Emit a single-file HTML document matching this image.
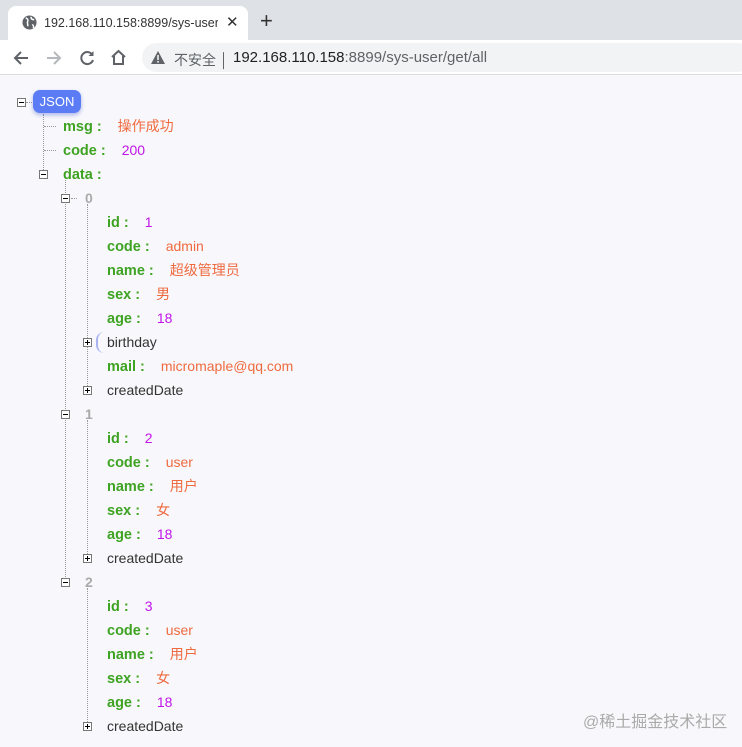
<!DOCTYPE html>
<html><head><meta charset="utf-8"><style>
*{margin:0;padding:0;box-sizing:border-box}
body{width:742px;height:747px;overflow:hidden;background:#f8f8fc;font-family:"Liberation Sans","Noto Sans CJK SC",sans-serif;position:relative}
.tabbar{position:absolute;left:0;top:0;width:742px;height:40px;background:#dee1e6}
.tab{position:absolute;left:8px;top:6px;width:240px;height:34px;background:#fff;border-radius:8px 8px 0 0}
.tab .t{position:absolute;left:36px;top:10px;font-size:12.5px;color:#333;white-space:nowrap;width:174px;overflow:hidden}
.tab .x{position:absolute;left:218px;top:7px;font-size:15px;color:#333}
.plus{position:absolute;left:260px;top:8px;font-size:22px;color:#333}
.nav{position:absolute;left:0;top:40px;width:742px;height:35px;background:#fff;border-bottom:1px solid #dadce0}
.addr{position:absolute;left:142px;top:3px;width:610px;height:29px;background:#f1f3f4;border-radius:15px}
.addr .w{position:absolute;left:32px;top:7px;font-size:14px;color:#5f6368}
.addr .u{position:absolute;left:91px;top:6px;font-size:15px;color:#202124}
.r{position:absolute;height:20px;line-height:20px;font-size:14px;white-space:nowrap}
.k{color:#3ea322;font-weight:bold;font-size:14.5px}
.s,.n{margin-left:16px}
.s{color:#ee6a3f}
.n{color:#c014e8}
.i{color:#aaa;font-weight:bold}
.p{color:#333}
.box{position:absolute;width:9px;height:9px;border:1px solid #777;background:#fff}
.box:before{content:"";position:absolute;left:1px;top:3px;width:5px;height:1px;background:#000}
.box.plusb:after{content:"";position:absolute;left:3px;top:1px;width:1px;height:5px;background:#000}
.vl{position:absolute;width:0;border-left:1px dotted #999}
.hl{position:absolute;height:0;border-top:1px dotted #999}
.json{position:absolute;left:33px;top:90px;width:48px;height:23px;background:#5b7cf5;border-radius:7px;color:#fff;font-size:13px;line-height:23px;text-align:center;box-shadow:0 2px 4px rgba(60,80,200,.4)}
.wm{position:absolute;left:583px;top:708px;font-size:16px;color:#aaa}
</style></head><body>
<div class="tabbar">
 <div class="tab">
  <svg style="position:absolute;left:14px;top:9px" width="15" height="15" viewBox="0 0 16 16"><circle cx="8" cy="8" r="7.5" fill="#5f6368"/><path d="M4 3c2 1 3 2 2 4s1 3 0 5M10 2c-1 2 1 3 3 3M11 10c1 1 2 2 1 4" stroke="#fff" stroke-width="1.6" fill="none"/></svg>
  <div class="t">192.168.110.158:8899/sys-user</div>
  <div class="x">✕</div>
 </div>
 <div class="plus">+</div>
</div>
<div class="nav">
 <svg style="position:absolute;left:12px;top:9px" width="18" height="18" viewBox="0 0 18 18"><path d="M16 9H3M9 3L3 9l6 6" stroke="#5f6368" stroke-width="2" fill="none"/></svg>
 <svg style="position:absolute;left:45px;top:9px" width="18" height="18" viewBox="0 0 18 18"><path d="M2 9h13M9 3l6 6-6 6" stroke="#b5b8bc" stroke-width="2" fill="none"/></svg>
 <svg style="position:absolute;left:78px;top:9px" width="18" height="18" viewBox="0 0 18 18"><path d="M14.5 6A6 6 0 1 0 15 11" stroke="#5f6368" stroke-width="2" fill="none"/><path d="M15.5 2v5h-5z" fill="#5f6368"/></svg>
 <svg style="position:absolute;left:109px;top:8px" width="19" height="19" viewBox="0 0 19 19"><path d="M3 9L9.5 3 16 9M5 8v8h9V8" stroke="#5f6368" stroke-width="2" fill="none"/></svg>
 <div class="addr">
  <svg style="position:absolute;left:9px;top:8px" width="14" height="13" viewBox="0 0 14 13"><path d="M7 0L14 13H0z" fill="#5f6368"/><rect x="6.2" y="4" width="1.6" height="5" fill="#f1f3f4"/><rect x="6.2" y="10" width="1.6" height="1.6" fill="#f1f3f4"/></svg>
  <div class="w">不安全 │</div>
  <div class="u">192.168.110.158<span style="color:#5f6368">:8899/sys-user/get/all</span></div>
 </div>
</div>

<div class="vl" style="left:43px;top:114px;height:60px"></div>
<div class="hl" style="left:44px;top:126px;width:12px"></div>
<div class="hl" style="left:44px;top:150px;width:12px"></div>
<div class="vl" style="left:65px;top:180px;height:403px"></div>
<div class="vl" style="left:87px;top:204px;height:186px"></div>
<div class="vl" style="left:87px;top:420px;height:138px"></div>
<div class="vl" style="left:87px;top:588px;height:138px"></div>
<div class="hl" style="left:26px;top:102px;width:6px"></div>

<div class="box" style="left:17px;top:98px"></div>
<div class="json">JSON</div>
<div class="r" style="left:63px;top:116px"><span class="k">msg :</span><span class="s">操作成功</span></div>
<div class="r" style="left:63px;top:140px"><span class="k">code :</span><span class="n">200</span></div>
<div class="box" style="left:39px;top:170px"></div>
<div class="r" style="left:63px;top:164px"><span class="k">data :</span></div>

<div class="box" style="left:61px;top:194px"></div><div class="hl" style="left:71px;top:198px;width:6px"></div>
<div class="r" style="left:85px;top:188px"><span class="i">0</span></div>
<div class="r" style="left:107px;top:212px"><span class="k">id :</span><span class="n">1</span></div>
<div class="r" style="left:107px;top:236px"><span class="k">code :</span><span class="s">admin</span></div>
<div class="r" style="left:107px;top:260px"><span class="k">name :</span><span class="s">超级管理员</span></div>
<div class="r" style="left:107px;top:284px"><span class="k">sex :</span><span class="s">男</span></div>
<div class="r" style="left:107px;top:308px"><span class="k">age :</span><span class="n">18</span></div>
<div class="box plusb" style="left:83px;top:338px"></div>
<div style="position:absolute;left:96px;top:332px;width:8px;height:21px;border-left:2px solid #a8b4f0;border-radius:8px 0 0 8px"></div>
<div class="r" style="left:107px;top:332px"><span class="p">birthday</span></div>
<div class="r" style="left:107px;top:356px"><span class="k">mail :</span><span class="s">micromaple@qq.com</span></div>
<div class="box plusb" style="left:83px;top:386px"></div>
<div class="r" style="left:107px;top:380px"><span class="p">createdDate</span></div>

<div class="box" style="left:61px;top:410px"></div>
<div class="r" style="left:85px;top:404px"><span class="i">1</span></div>
<div class="r" style="left:107px;top:428px"><span class="k">id :</span><span class="n">2</span></div>
<div class="r" style="left:107px;top:452px"><span class="k">code :</span><span class="s">user</span></div>
<div class="r" style="left:107px;top:476px"><span class="k">name :</span><span class="s">用户</span></div>
<div class="r" style="left:107px;top:500px"><span class="k">sex :</span><span class="s">女</span></div>
<div class="r" style="left:107px;top:524px"><span class="k">age :</span><span class="n">18</span></div>
<div class="box plusb" style="left:83px;top:554px"></div>
<div class="r" style="left:107px;top:548px"><span class="p">createdDate</span></div>

<div class="box" style="left:61px;top:578px"></div>
<div class="r" style="left:85px;top:572px"><span class="i">2</span></div>
<div class="r" style="left:107px;top:596px"><span class="k">id :</span><span class="n">3</span></div>
<div class="r" style="left:107px;top:620px"><span class="k">code :</span><span class="s">user</span></div>
<div class="r" style="left:107px;top:644px"><span class="k">name :</span><span class="s">用户</span></div>
<div class="r" style="left:107px;top:668px"><span class="k">sex :</span><span class="s">女</span></div>
<div class="r" style="left:107px;top:692px"><span class="k">age :</span><span class="n">18</span></div>
<div class="box plusb" style="left:83px;top:722px"></div>
<div class="r" style="left:107px;top:716px"><span class="p">createdDate</span></div>

<div class="wm">@稀土掘金技术社区</div>
</body></html>
